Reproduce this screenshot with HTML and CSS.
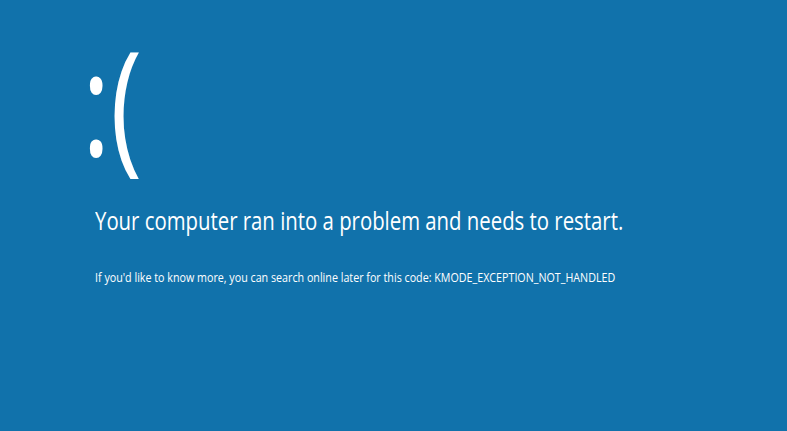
FILE: index.html
```html
<!DOCTYPE html>
<html lang="en">
<head>
<meta charset="utf-8">
<title>Your PC ran into a problem</title>
<link rel="stylesheet" href="styles.css">
</head>
<body>
<main class="screen">
  <div class="face">:(</div>
  <p class="headline">Your computer ran into a problem and needs to restart.</p>
  <p class="details">If you'd like to know more, you can search online later for this code: KMODE_EXCEPTION_NOT_HANDLED</p>
</main>
</body>
</html>
```
FILE: styles.css
```css
html, body {
  margin: 0;
  padding: 0;
  background: #1172ab;
}
.screen {
  box-sizing: border-box;
  width: 787px;
  height: 431px;
  padding: 28px 0 0 95px;
  display: flex;
  flex-direction: column;
  align-items: flex-start;
  color: #ffffff;
  font-family: "Open Sans", "Noto Sans", sans-serif;
  overflow: hidden;
}
.face {
  margin-left: -13px;
  font-size: 144px;
  line-height: 144px;
  font-weight: 400;
  transform: scaleX(0.75);
  transform-origin: left center;
  white-space: nowrap;
}
.headline {
  margin: 33px 0 0 0;
  font-size: 25px;
  line-height: 30px;
  white-space: nowrap;
  transform: scaleX(0.814);
  transform-origin: left center;
}
.details {
  margin: 34px 0 0 0;
  font-size: 13px;
  line-height: 16px;
  white-space: nowrap;
  transform: scaleX(0.824);
  transform-origin: left center;
}
```
